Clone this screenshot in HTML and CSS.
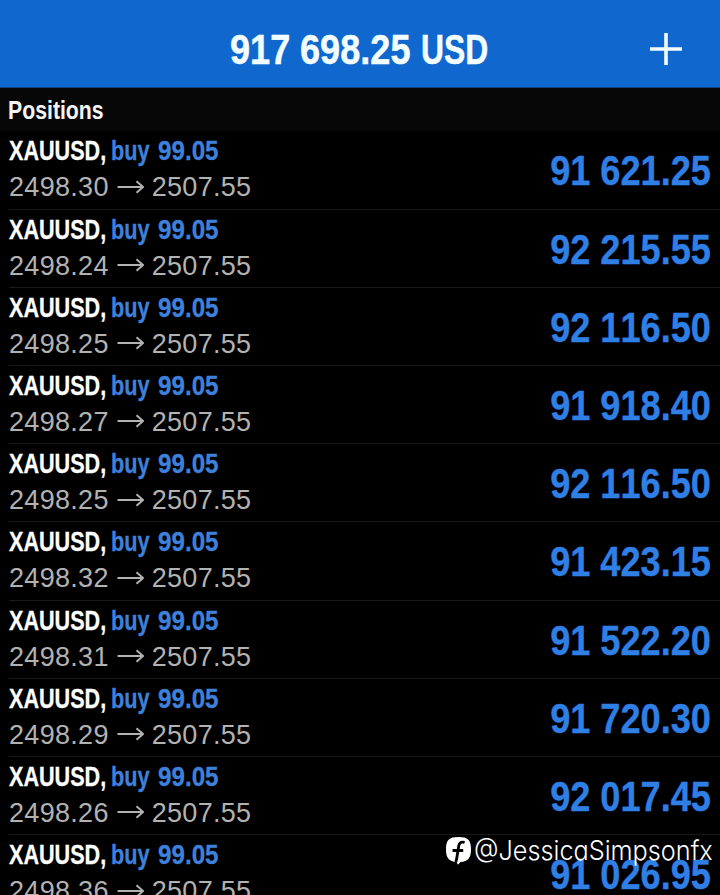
FILE: index.html
```html
<!DOCTYPE html>
<html lang="en">
  <head>
    <meta charset="UTF-8" />
    <meta name="viewport" content="width=device-width, initial-scale=1" />
    <title>Positions</title>
    <link rel="stylesheet" href="styles.css">
  </head>
  <body>
    <svg class="defs" width="0" height="0">
      <symbol id="arrow" viewBox="0 0 27 14">
        <path d="M0.5 7H26M19.5 1.2L26 7L19.5 12.8" fill="none" stroke="currentColor" stroke-width="1.9" />
      </symbol>
    </svg>

    <!-- Top bar -->
    <header class="header">
      <h1 class="balance"><span class="whole">917</span><span class="amount">698.25</span><span class="currency">USD</span></h1>
      <svg class="add" viewBox="0 0 32 32"><path d="M16 0V32M0 16H32" stroke="#f2fdff" stroke-width="3.6" /></svg>
    </header>

    <h2 class="section-title"><span>Positions</span></h2>

    <!-- Open positions -->
    <main class="positions">
      <div class="row">
        <div class="info">
          <div class="name"><span class="symbol">XAUUSD,</span><span class="side">buy</span><span class="volume">99.05</span></div>
          <div class="price"><span>2498.30</span><svg class="arrow"><use href="#arrow" /></svg><span>2507.55</span></div>
        </div>
        <div class="profit">91 621.25</div>
      </div>
      <div class="row">
        <div class="info">
          <div class="name"><span class="symbol">XAUUSD,</span><span class="side">buy</span><span class="volume">99.05</span></div>
          <div class="price"><span>2498.24</span><svg class="arrow"><use href="#arrow" /></svg><span>2507.55</span></div>
        </div>
        <div class="profit">92 215.55</div>
      </div>
      <div class="row">
        <div class="info">
          <div class="name"><span class="symbol">XAUUSD,</span><span class="side">buy</span><span class="volume">99.05</span></div>
          <div class="price"><span>2498.25</span><svg class="arrow"><use href="#arrow" /></svg><span>2507.55</span></div>
        </div>
        <div class="profit">92 116.50</div>
      </div>
      <div class="row">
        <div class="info">
          <div class="name"><span class="symbol">XAUUSD,</span><span class="side">buy</span><span class="volume">99.05</span></div>
          <div class="price"><span>2498.27</span><svg class="arrow"><use href="#arrow" /></svg><span>2507.55</span></div>
        </div>
        <div class="profit">91 918.40</div>
      </div>
      <div class="row">
        <div class="info">
          <div class="name"><span class="symbol">XAUUSD,</span><span class="side">buy</span><span class="volume">99.05</span></div>
          <div class="price"><span>2498.25</span><svg class="arrow"><use href="#arrow" /></svg><span>2507.55</span></div>
        </div>
        <div class="profit">92 116.50</div>
      </div>
      <div class="row">
        <div class="info">
          <div class="name"><span class="symbol">XAUUSD,</span><span class="side">buy</span><span class="volume">99.05</span></div>
          <div class="price"><span>2498.32</span><svg class="arrow"><use href="#arrow" /></svg><span>2507.55</span></div>
        </div>
        <div class="profit">91 423.15</div>
      </div>
      <div class="row">
        <div class="info">
          <div class="name"><span class="symbol">XAUUSD,</span><span class="side">buy</span><span class="volume">99.05</span></div>
          <div class="price"><span>2498.31</span><svg class="arrow"><use href="#arrow" /></svg><span>2507.55</span></div>
        </div>
        <div class="profit">91 522.20</div>
      </div>
      <div class="row">
        <div class="info">
          <div class="name"><span class="symbol">XAUUSD,</span><span class="side">buy</span><span class="volume">99.05</span></div>
          <div class="price"><span>2498.29</span><svg class="arrow"><use href="#arrow" /></svg><span>2507.55</span></div>
        </div>
        <div class="profit">91 720.30</div>
      </div>
      <div class="row">
        <div class="info">
          <div class="name"><span class="symbol">XAUUSD,</span><span class="side">buy</span><span class="volume">99.05</span></div>
          <div class="price"><span>2498.26</span><svg class="arrow"><use href="#arrow" /></svg><span>2507.55</span></div>
        </div>
        <div class="profit">92 017.45</div>
      </div>
      <div class="row">
        <div class="info">
          <div class="name"><span class="symbol">XAUUSD,</span><span class="side">buy</span><span class="volume">99.05</span></div>
          <div class="price"><span>2498.36</span><svg class="arrow"><use href="#arrow" /></svg><span>2507.55</span></div>
        </div>
        <div class="profit">91 026.95</div>
      </div>
    </main>

    <!-- Account tag over the list -->
    <div class="watermark">
      <svg class="logo" viewBox="0 0 25 28">
        <path d="M12.5 0C3 0 0 3 0 12.5C0 21 3 24.6 10.5 25L12 27.8L14.5 25C22 24.6 25 21 25 12.5C25 3 22 0 12.5 0Z" fill="#fff" />
        <path d="M18.6 5.4C15 4.4 13.2 6 12.7 9.2L11.2 18.5C10.9 21 10.5 23 9.8 25M6.5 13.5H17.2" fill="none" stroke="#000" stroke-width="2.8" />
      </svg>
      <span>@JessicaSimpsonfx</span>
    </div>
  </body>
</html>
```
FILE: styles.css
```css
* { box-sizing: border-box; }
html, body {
  margin: 0;
  padding: 0;
  height: 895px;
  overflow: hidden;
  background: #000;
  font-family: "Liberation Sans", Arial, sans-serif;
}
body { position: relative; }
.defs { display: block; }
h1, h2 { margin: 0; }

/* Top bar */
.header {
  height: 88px;
  padding: 13px 38px 0 230px;
  display: flex;
  align-items: center;
  justify-content: space-between;
  background: #1068ce;
  border-bottom: 1px solid #11427f;
}
.balance {
  display: flex;
  font-size: 42.5px;
  line-height: 70px;
  color: #f2fdff;
  -webkit-text-stroke: 0.5px #f2fdff;
}
.balance span, .name span {
  white-space: nowrap;
  transform-origin: left;
}
.whole { width: 70px; transform: scaleX(0.85); }
.amount { width: 121px; transform: scaleX(0.85); }
.currency { width: 70px; transform: scaleX(0.75); }
.add { width: 32px; height: 32px; margin-top: -3px; }

.section-title {
  height: 43.4px;
  padding-left: 8px;
  background: #070707;
  color: #f5f5f5;
  font-size: 25px;
  line-height: 45px;
}
.section-title span {
  display: inline-block;
  transform: scaleX(0.85);
  transform-origin: left;
}

/* Positions list */
.row {
  height: 78.2px;
  margin-left: 9px;
  padding-right: 9px;
  display: flex;
  justify-content: space-between;
  border-bottom: 1.5px solid #191919;
}
.name {
  display: flex;
  font-size: 27.5px;
  font-weight: bold;
  line-height: 40px;
  color: #fff;
  -webkit-text-stroke: 0.3px;
}
.symbol { width: 102px; transform: scaleX(0.785); }
.side { width: 47px; transform: scaleX(0.79); }
.volume { width: 60px; transform: scaleX(0.88); }
.side, .volume { color: #3e80dc; }
.price {
  display: flex;
  align-items: center;
  font-size: 27px;
  line-height: 33px;
  letter-spacing: 0.3px;
  color: #b2b2b2;
}
.arrow { width: 27px; height: 14px; margin: 0 8px 2px; }
.profit {
  font-size: 42px;
  font-weight: bold;
  font-kerning: none;
  line-height: 80px;
  color: #2f7fe4;
  white-space: nowrap;
  transform: scaleX(0.86);
  transform-origin: right;
  -webkit-text-stroke: 0.4px;
}

/* Account tag */
.watermark {
  position: absolute;
  left: 446px;
  top: 833px;
  display: flex;
  align-items: center;
  gap: 3px;
  color: #fff;
  font-family: Inter, "Open Sans", sans-serif;
  font-size: 27px;
  font-weight: 300;
  font-feature-settings: "cv11";
  line-height: 36px;
}
.watermark span {
  transform: scaleX(0.935);
  transform-origin: left;
}
.logo { width: 25px; height: 28px; }
```
